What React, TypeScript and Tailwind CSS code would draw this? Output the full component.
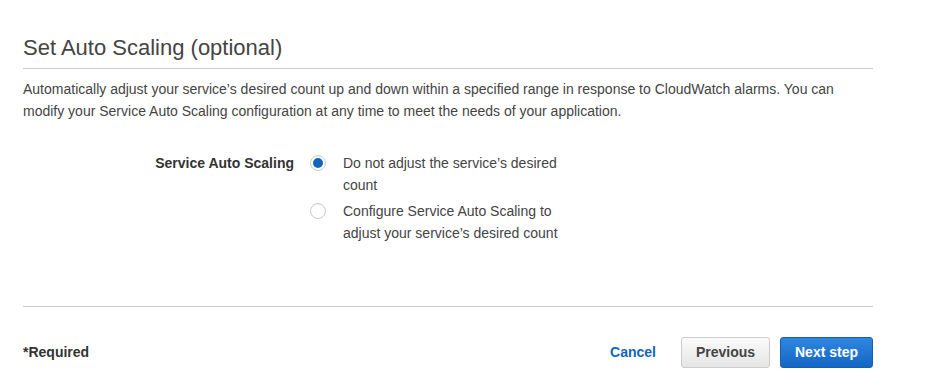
export default function App() {
  return (
    <div className="w-[927px] h-[386px] bg-white font-['Liberation_Sans',Arial,sans-serif] text-[#444]">
      <div className="w-[850px] ml-[23px] pt-[35px]">
        {/* Section header */}
        <h2 className="text-[22px] leading-[26px] text-[#444] pb-[7px] border-b border-[#ccc]">
          Set Auto Scaling (optional)
        </h2>
        <p className="text-[14px] leading-[22px] mt-[9px] pr-[20px]">
          Automatically adjust your service’s desired count up and down within a specified range in response to CloudWatch alarms. You can modify your Service Auto Scaling configuration at any time to meet the needs of your application.
        </p>

        {/* Form row */}
        <div className="flex mt-[30px] text-[14px] leading-[22px]">
          <div className="w-[272px] text-right font-bold text-[#333] pr-[1px]">Service Auto Scaling</div>
          <div className="flex flex-col gap-[4px] ml-[15px]">
            <RadioOption checked label="Do not adjust the service’s desired count" />
            <RadioOption label="Configure Service Auto Scaling to adjust your service’s desired count" />
          </div>
        </div>

        {/* Footer */}
        <div className="mt-[62px] border-t border-[#ccc]" />
        <div className="flex items-center mt-[30px]">
          <div className="text-[14px] font-bold text-[#333]">*Required</div>
          <div className="ml-auto flex items-center">
            <button className="text-[14px] font-bold text-[#1166bb] mr-[25px]">Cancel</button>
            <button className="h-[31px] w-[89px] rounded-[3px] border border-[#ccc] bg-gradient-to-b from-[#fbfbfb] to-[#e5e5e5] text-[14px] font-bold text-[#444]">
              Previous
            </button>
            <button className="h-[31px] w-[93px] ml-[10px] rounded-[3px] border border-[#1a5da8] bg-gradient-to-b from-[#2e88e0] to-[#1465c4] text-[14px] font-bold text-white">
              Next step
            </button>
          </div>
        </div>
      </div>
    </div>
  );
}

function RadioOption({ checked = false, label }: { checked?: boolean; label: string }) {
  return (
    <label className="flex items-start">
      <span className="mt-[3px] w-[16px] h-[16px] rounded-full border border-[#ccc] bg-white flex items-center justify-center shrink-0 shadow-[inset_0_1px_1px_rgba(0,0,0,0.05)]">
        {checked && <span className="w-[10px] h-[10px] rounded-full bg-[#1166bb]" />}
      </span>
      <span className="ml-[17px] w-[220px] text-[#444]">{label}</span>
    </label>
  );
}
